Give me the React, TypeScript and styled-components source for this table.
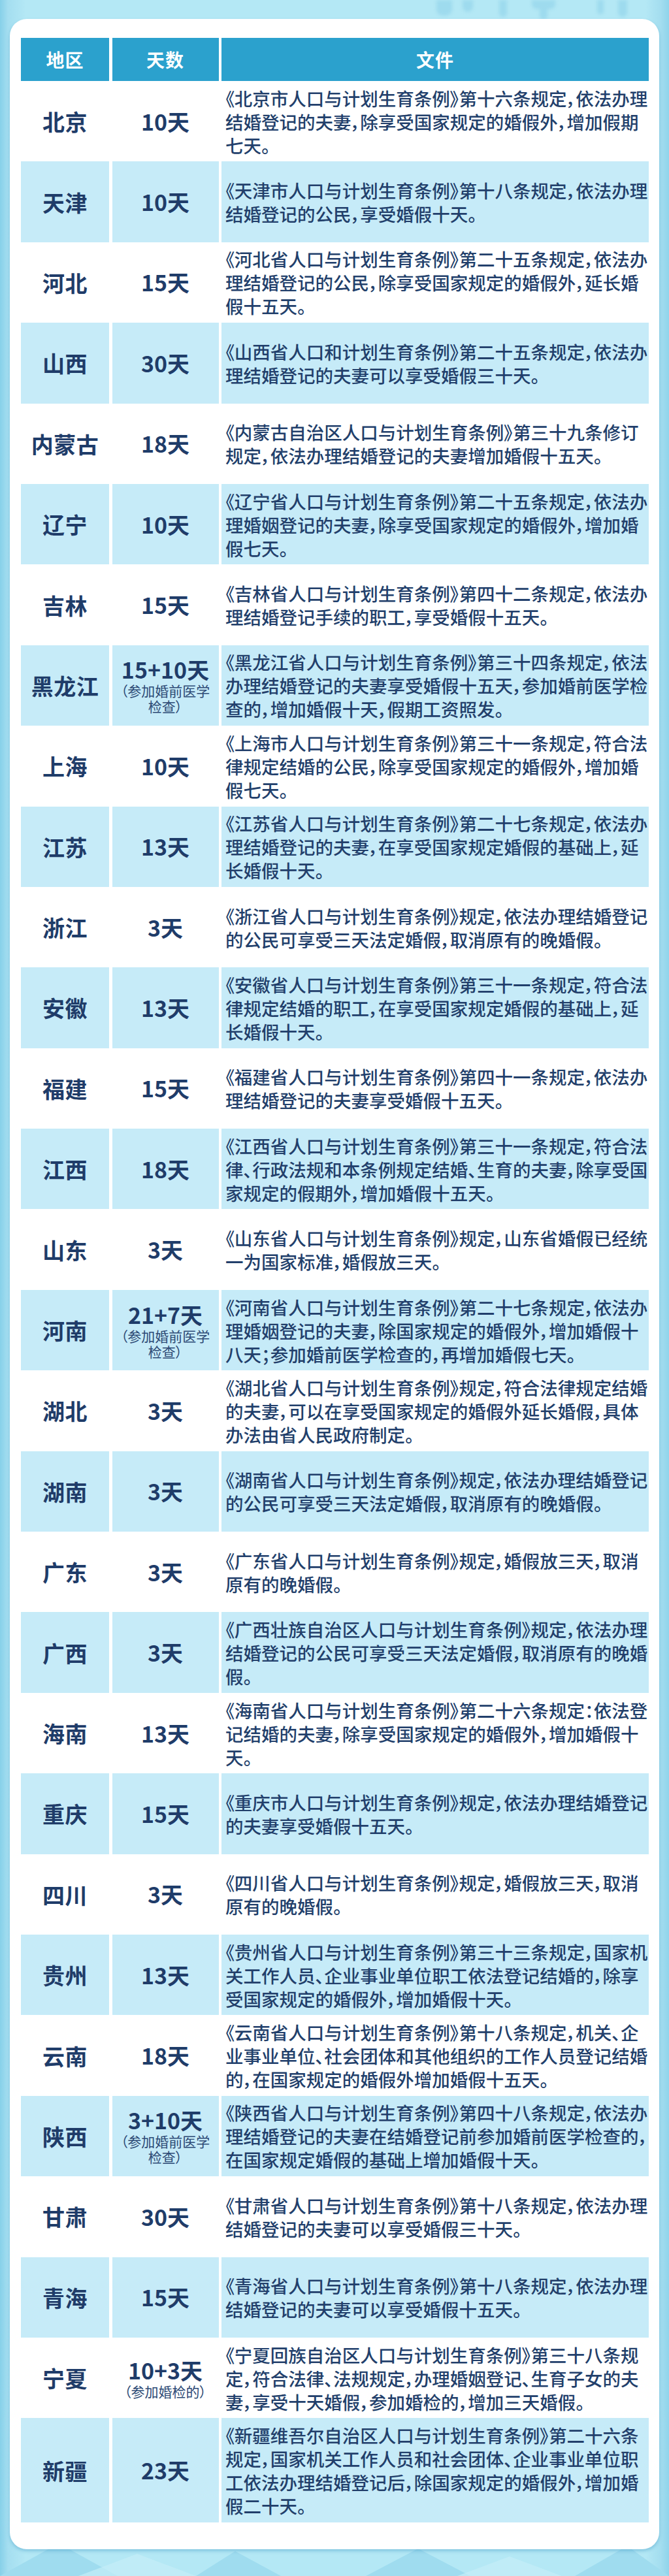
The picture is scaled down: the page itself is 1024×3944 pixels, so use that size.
import React from "react";
import styled, { createGlobalStyle } from "styled-components";

const GlobalStyle = createGlobalStyle`
  html, body {
    margin: 0;
    padding: 0;
  }
  body {
    background: #b1e6f4;
    font-family: "Noto Sans CJK SC", "Noto Sans", sans-serif;
  }
`;

type Policy = {
  region: string;
  days: string;
  note?: string[];
  lines: string[];
};

const policies: Policy[] = [
  {
    region: "北京",
    days: "10天",
    lines: [
      "《北京市人口与计划生育条例》第十六条规定，依法办理",
      "结婚登记的夫妻，除享受国家规定的婚假外，增加假期",
      "七天。",
    ],
  },
  {
    region: "天津",
    days: "10天",
    lines: [
      "《天津市人口与计划生育条例》第十八条规定，依法办理",
      "结婚登记的公民，享受婚假十天。",
    ],
  },
  {
    region: "河北",
    days: "15天",
    lines: [
      "《河北省人口与计划生育条例》第二十五条规定，依法办",
      "理结婚登记的公民，除享受国家规定的婚假外，延长婚",
      "假十五天。",
    ],
  },
  {
    region: "山西",
    days: "30天",
    lines: [
      "《山西省人口和计划生育条例》第二十五条规定，依法办",
      "理结婚登记的夫妻可以享受婚假三十天。",
    ],
  },
  {
    region: "内蒙古",
    days: "18天",
    lines: [
      "《内蒙古自治区人口与计划生育条例》第三十九条修订",
      "规定，依法办理结婚登记的夫妻增加婚假十五天。",
    ],
  },
  {
    region: "辽宁",
    days: "10天",
    lines: [
      "《辽宁省人口与计划生育条例》第二十五条规定，依法办",
      "理婚姻登记的夫妻，除享受国家规定的婚假外，增加婚",
      "假七天。",
    ],
  },
  {
    region: "吉林",
    days: "15天",
    lines: [
      "《吉林省人口与计划生育条例》第四十二条规定，依法办",
      "理结婚登记手续的职工，享受婚假十五天。",
    ],
  },
  {
    region: "黑龙江",
    days: "15+10天",
    note: ["（参加婚前医学", "检查）"],
    lines: [
      "《黑龙江省人口与计划生育条例》第三十四条规定，依法",
      "办理结婚登记的夫妻享受婚假十五天，参加婚前医学检",
      "查的，增加婚假十天，假期工资照发。",
    ],
  },
  {
    region: "上海",
    days: "10天",
    lines: [
      "《上海市人口与计划生育条例》第三十一条规定，符合法",
      "律规定结婚的公民，除享受国家规定的婚假外，增加婚",
      "假七天。",
    ],
  },
  {
    region: "江苏",
    days: "13天",
    lines: [
      "《江苏省人口与计划生育条例》第二十七条规定，依法办",
      "理结婚登记的夫妻，在享受国家规定婚假的基础上，延",
      "长婚假十天。",
    ],
  },
  {
    region: "浙江",
    days: "3天",
    lines: [
      "《浙江省人口与计划生育条例》规定，依法办理结婚登记",
      "的公民可享受三天法定婚假，取消原有的晚婚假。",
    ],
  },
  {
    region: "安徽",
    days: "13天",
    lines: [
      "《安徽省人口与计划生育条例》第三十一条规定，符合法",
      "律规定结婚的职工，在享受国家规定婚假的基础上，延",
      "长婚假十天。",
    ],
  },
  {
    region: "福建",
    days: "15天",
    lines: [
      "《福建省人口与计划生育条例》第四十一条规定，依法办",
      "理结婚登记的夫妻享受婚假十五天。",
    ],
  },
  {
    region: "江西",
    days: "18天",
    lines: [
      "《江西省人口与计划生育条例》第三十一条规定，符合法",
      "律、行政法规和本条例规定结婚、生育的夫妻，除享受国",
      "家规定的假期外，增加婚假十五天。",
    ],
  },
  {
    region: "山东",
    days: "3天",
    lines: [
      "《山东省人口与计划生育条例》规定，山东省婚假已经统",
      "一为国家标准，婚假放三天。",
    ],
  },
  {
    region: "河南",
    days: "21+7天",
    note: ["（参加婚前医学", "检查）"],
    lines: [
      "《河南省人口与计划生育条例》第二十七条规定，依法办",
      "理婚姻登记的夫妻，除国家规定的婚假外，增加婚假十",
      "八天；参加婚前医学检查的，再增加婚假七天。",
    ],
  },
  {
    region: "湖北",
    days: "3天",
    lines: [
      "《湖北省人口与计划生育条例》规定，符合法律规定结婚",
      "的夫妻，可以在享受国家规定的婚假外延长婚假，具体",
      "办法由省人民政府制定。",
    ],
  },
  {
    region: "湖南",
    days: "3天",
    lines: [
      "《湖南省人口与计划生育条例》规定，依法办理结婚登记",
      "的公民可享受三天法定婚假，取消原有的晚婚假。",
    ],
  },
  {
    region: "广东",
    days: "3天",
    lines: [
      "《广东省人口与计划生育条例》规定，婚假放三天，取消",
      "原有的晚婚假。",
    ],
  },
  {
    region: "广西",
    days: "3天",
    lines: [
      "《广西壮族自治区人口与计划生育条例》规定，依法办理",
      "结婚登记的公民可享受三天法定婚假，取消原有的晚婚",
      "假。",
    ],
  },
  {
    region: "海南",
    days: "13天",
    lines: [
      "《海南省人口与计划生育条例》第二十六条规定：依法登",
      "记结婚的夫妻，除享受国家规定的婚假外，增加婚假十",
      "天。",
    ],
  },
  {
    region: "重庆",
    days: "15天",
    lines: [
      "《重庆市人口与计划生育条例》规定，依法办理结婚登记",
      "的夫妻享受婚假十五天。",
    ],
  },
  {
    region: "四川",
    days: "3天",
    lines: [
      "《四川省人口与计划生育条例》规定，婚假放三天，取消",
      "原有的晚婚假。",
    ],
  },
  {
    region: "贵州",
    days: "13天",
    lines: [
      "《贵州省人口与计划生育条例》第三十三条规定，国家机",
      "关工作人员、企业事业单位职工依法登记结婚的，除享",
      "受国家规定的婚假外，增加婚假十天。",
    ],
  },
  {
    region: "云南",
    days: "18天",
    lines: [
      "《云南省人口与计划生育条例》第十八条规定，机关、企",
      "业事业单位、社会团体和其他组织的工作人员登记结婚",
      "的，在国家规定的婚假外增加婚假十五天。",
    ],
  },
  {
    region: "陕西",
    days: "3+10天",
    note: ["（参加婚前医学", "检查）"],
    lines: [
      "《陕西省人口与计划生育条例》第四十八条规定，依法办",
      "理结婚登记的夫妻在结婚登记前参加婚前医学检查的，",
      "在国家规定婚假的基础上增加婚假十天。",
    ],
  },
  {
    region: "甘肃",
    days: "30天",
    lines: [
      "《甘肃省人口与计划生育条例》第十八条规定，依法办理",
      "结婚登记的夫妻可以享受婚假三十天。",
    ],
  },
  {
    region: "青海",
    days: "15天",
    lines: [
      "《青海省人口与计划生育条例》第十八条规定，依法办理",
      "结婚登记的夫妻可以享受婚假十五天。",
    ],
  },
  {
    region: "宁夏",
    days: "10+3天",
    note: ["（参加婚检的）"],
    lines: [
      "《宁夏回族自治区人口与计划生育条例》第三十八条规",
      "定，符合法律、法规规定，办理婚姻登记、生育子女的夫",
      "妻，享受十天婚假，参加婚检的，增加三天婚假。",
    ],
  },
  {
    region: "新疆",
    days: "23天",
    lines: [
      "《新疆维吾尔自治区人口与计划生育条例》第二十六条",
      "规定，国家机关工作人员和社会团体、企业事业单位职",
      "工依法办理结婚登记后，除国家规定的婚假外，增加婚",
      "假二十天。",
    ],
  },
];

const Page = styled.div`
  position: relative;
  box-sizing: border-box;
  min-height: 3944px;
  padding: 29px 15px 0;
  overflow: hidden;
  background: linear-gradient(
    90deg,
    #86d0e9 0,
    #a4def0 12px,
    #b4e8f5 40px,
    #b4e8f5 calc(100% - 36px),
    #a3ddef calc(100% - 12px),
    #8fd4eb 100%
  );
`;

const TopArt = styled.svg`
  position: absolute;
  top: 0;
  right: 40px;
  width: 320px;
  height: 40px;
  filter: blur(2.5px);
`;

const BottomArt = styled.svg`
  position: absolute;
  left: 0;
  bottom: 0;
  width: 1024px;
  height: 60px;
`;

const Card = styled.div`
  position: relative;
  z-index: 1;
  background: #ffffff;
  border-radius: 26px;
  padding: 29px 16px 41px 17px;
  box-shadow: 0 3px 5px rgba(44, 138, 186, 0.35);
`;

const Row = styled.div<{ $head?: boolean }>`
  display: grid;
  grid-template-columns: 135px 163px 1fr;
  column-gap: 4.5px;
  min-height: ${(p) => (p.$head ? "66px" : "123.4px")};
`;

const HeadCell = styled.div`
  display: flex;
  align-items: center;
  justify-content: center;
  background: #2ba1cd;
  color: #ffffff;
  font-size: 28px;
  font-weight: 700;
  letter-spacing: 1px;
`;

const Cell = styled.div<{ $tint: boolean }>`
  display: flex;
  flex-direction: column;
  justify-content: center;
  background: ${(p) => (p.$tint ? "#c6ebf8" : "transparent")};
  color: #1f3c69;
`;

const RegionCell = styled(Cell)`
  align-items: center;
  font-size: 34px;
  font-weight: 700;
  letter-spacing: 0.5px;
`;

const DaysCell = styled(Cell)`
  align-items: center;
  text-align: center;
`;

const Days = styled.div`
  font-size: 34px;
  font-weight: 700;
  line-height: 40px;
`;

const Note = styled.div`
  font-size: 21px;
  font-weight: 400;
  line-height: 24px;
  color: #2d4a75;
  font-feature-settings: "palt";
`;

const DocCell = styled(Cell)`
  box-sizing: border-box;
  padding: 7.7px 0 7.7px 6px;
  font-size: 27.5px;
  font-weight: 500;
  line-height: 36px;
  color: #223f6b;
  font-feature-settings: "palt";
`;

const Line = styled.div`
  white-space: nowrap;
`;

export default function App() {
  return (
    <>
      <GlobalStyle />
      <Page>
        <TopArt viewBox="0 0 320 40">
          <g fill="#8fd3ea" opacity="0.6">
            <rect x="4" y="-6" width="24" height="30" rx="10" />
            <rect x="44" y="-6" width="16" height="24" rx="8" />
            <rect x="100" y="-6" width="12" height="32" rx="6" />
            <rect x="150" y="-6" width="36" height="20" rx="8" />
            <rect x="162" y="8" width="12" height="22" rx="6" />
            <rect x="250" y="-6" width="10" height="28" rx="5" />
            <rect x="282" y="-6" width="14" height="32" rx="7" />
          </g>
        </TopArt>
        <Card>
          <Row $head>
            <HeadCell>地区</HeadCell>
            <HeadCell>天数</HeadCell>
            <HeadCell>文件</HeadCell>
          </Row>
          {policies.map((p, i) => {
            const tint = i % 2 === 1;
            return (
              <Row key={p.region}>
                <RegionCell $tint={tint}>{p.region}</RegionCell>
                <DaysCell $tint={tint}>
                  <Days>{p.days}</Days>
                  {p.note?.map((n) => (
                    <Note key={n}>{n}</Note>
                  ))}
                </DaysCell>
                <DocCell $tint={tint}>
                  {p.lines.map((l, k) => (
                    <Line key={k}>{l}</Line>
                  ))}
                </DocCell>
              </Row>
            );
          })}
        </Card>
        <BottomArt viewBox="0 0 1024 60">
          <g fill="#9fdcef">
            <polygon points="0,60 90,10 180,60" />
            <polygon points="300,60 360,22 430,60" />
            <polygon points="560,60 640,18 720,60" />
            <polygon points="880,60 960,14 1024,60" />
          </g>
          <g fill="#c4eef8" opacity="0.7">
            <polygon points="120,60 210,26 300,60" />
            <polygon points="700,60 780,30 860,60" />
          </g>
        </BottomArt>
      </Page>
    </>
  );
}
